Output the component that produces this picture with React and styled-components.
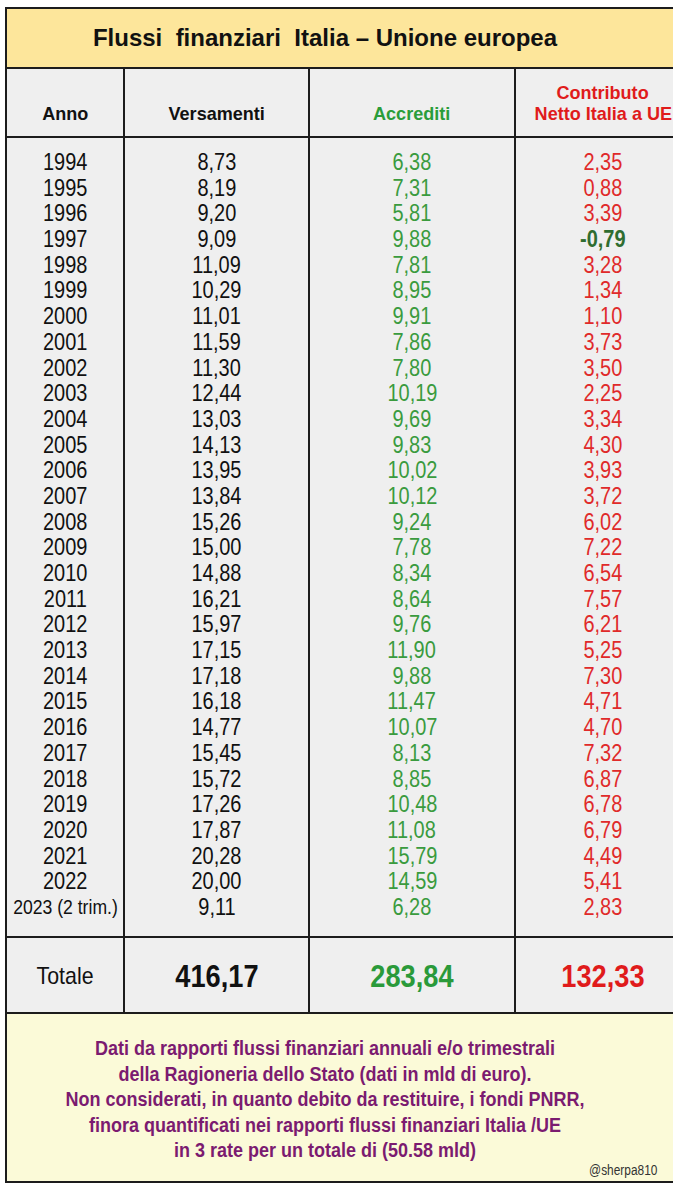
import styled, { createGlobalStyle } from "styled-components";

const GlobalStyle = createGlobalStyle`
  html, body {
    margin: 0;
    padding: 0;
    background: #ffffff;
    overflow: hidden;
  }
  body {
    font-family: "Liberation Sans", Arial, sans-serif;
  }
`;

const rows = [
  ["1994", "8,73", "6,38", "2,35"],
  ["1995", "8,19", "7,31", "0,88"],
  ["1996", "9,20", "5,81", "3,39"],
  ["1997", "9,09", "9,88", "-0,79"],
  ["1998", "11,09", "7,81", "3,28"],
  ["1999", "10,29", "8,95", "1,34"],
  ["2000", "11,01", "9,91", "1,10"],
  ["2001", "11,59", "7,86", "3,73"],
  ["2002", "11,30", "7,80", "3,50"],
  ["2003", "12,44", "10,19", "2,25"],
  ["2004", "13,03", "9,69", "3,34"],
  ["2005", "14,13", "9,83", "4,30"],
  ["2006", "13,95", "10,02", "3,93"],
  ["2007", "13,84", "10,12", "3,72"],
  ["2008", "15,26", "9,24", "6,02"],
  ["2009", "15,00", "7,78", "7,22"],
  ["2010", "14,88", "8,34", "6,54"],
  ["2011", "16,21", "8,64", "7,57"],
  ["2012", "15,97", "9,76", "6,21"],
  ["2013", "17,15", "11,90", "5,25"],
  ["2014", "17,18", "9,88", "7,30"],
  ["2015", "16,18", "11,47", "4,71"],
  ["2016", "14,77", "10,07", "4,70"],
  ["2017", "15,45", "8,13", "7,32"],
  ["2018", "15,72", "8,85", "6,87"],
  ["2019", "17,26", "10,48", "6,78"],
  ["2020", "17,87", "11,08", "6,79"],
  ["2021", "20,28", "15,79", "4,49"],
  ["2022", "20,00", "14,59", "5,41"],
  ["2023 (2 trim.)", "9,11", "6,28", "2,83"],
];

const colors = ["#111111", "#111111", "#3a9b3e", "#e02a2a"];

// the source uses a condensed face, so text is squeezed horizontally
const Frame = styled.div`
  margin: 7px 0 0 5px;
  width: 687px;
  border: 2px solid #1c1c1c;
  box-sizing: border-box;
`;

const TitleBand = styled.div`
  height: 60px;
  background: #fde69b;
  border-bottom: 2px solid #1c1c1c;
  display: flex;
  align-items: center;
  justify-content: center;
  padding-right: 47px;
  box-sizing: border-box;
`;

const Title = styled.h1`
  margin: 0;
  font-size: 24px;
  font-weight: 700;
  color: #111;
  white-space: pre;
`;

const Section = styled.div`
  display: grid;
  grid-template-columns: 118px 185px 206px 1fr;
  background: #efefef;
  border-bottom: 2px solid #1c1c1c;
  height: ${(p) => p.$h}px;
`;

const Cell = styled.div`
  border-right: ${(p) => (p.$end ? "none" : "2px solid #1c1c1c")};
  display: flex;
  flex-direction: column;
  align-items: center;
  justify-content: ${(p) => p.$justify || "center"};
  padding: ${(p) => p.$pad || "0"};
  text-align: center;
`;

const HeadLabel = styled.div`
  font-size: 19px;
  font-weight: 700;
  line-height: 21px;
  color: ${(p) => p.$color};
  transform: scaleX(0.95);
  white-space: nowrap;
`;

const Value = styled.div`
  font-size: ${(p) => (p.$small ? "20px" : "23.5px")};
  line-height: 25.7px;
  height: 25.7px;
  font-weight: ${(p) => (p.$bold ? 700 : 400)};
  color: ${(p) => p.$color};
  transform: scaleX(${(p) => (p.$small ? 0.88 : 0.85)});
  white-space: nowrap;
`;

const Total = styled.div`
  font-size: ${(p) => (p.$bold ? "32px" : "24px")};
  font-weight: ${(p) => (p.$bold ? 700 : 400)};
  color: ${(p) => p.$color};
  transform: scaleX(${(p) => (p.$bold ? 0.85 : 0.89)});
  margin-top: 2px;
`;

const Footer = styled.div`
  background: #fbfad8;
  height: 167px;
  padding: 22px 47px 0 0;
  box-sizing: border-box;
  position: relative;
`;

const Note = styled.p`
  margin: 0 auto;
  text-align: center;
  font-size: 20px;
  font-weight: 700;
  line-height: 25.5px;
  color: #7b1b70;
  transform: scaleX(0.9);
  white-space: nowrap;
`;

const Signature = styled.span`
  position: absolute;
  right: 33px;
  bottom: 3px;
  font-size: 14px;
  color: #333;
  transform: scaleX(0.85);
  transform-origin: right center;
`;

export default function App() {
  return (
    <>
      <GlobalStyle />
      <Frame>
        <TitleBand>
          <Title>{"Flussi  finanziari  Italia – Unione europea"}</Title>
        </TitleBand>
        <Section $h={67}>
          <Cell $justify="flex-end" $pad="0 0 12px">
            <HeadLabel $color="#111">Anno</HeadLabel>
          </Cell>
          <Cell $justify="flex-end" $pad="0 0 12px">
            <HeadLabel $color="#111">Versamenti</HeadLabel>
          </Cell>
          <Cell $justify="flex-end" $pad="0 0 12px">
            <HeadLabel $color="#2a9d3a">Accrediti</HeadLabel>
          </Cell>
          <Cell $end $justify="flex-end" $pad="0 0 12px">
            <HeadLabel $color="#e01b1b">Contributo</HeadLabel>
            <HeadLabel $color="#e01b1b">Netto Italia a UE</HeadLabel>
          </Cell>
        </Section>
        <Section $h={798}>
          {[0, 1, 2, 3].map((c) => (
            <Cell key={c} $end={c === 3} $justify="flex-start" $pad="12px 0 0">
              {rows.map((r, i) => {
                const neg = r[c].startsWith("-");
                return (
                  <Value
                    key={i}
                    $small={c === 0 && i === rows.length - 1}
                    $bold={neg}
                    $color={neg ? "#2f6d30" : colors[c]}
                  >
                    {r[c]}
                  </Value>
                );
              })}
            </Cell>
          ))}
        </Section>
        <Section $h={74}>
          <Cell>
            <Total $color="#111">Totale</Total>
          </Cell>
          <Cell>
            <Total $bold $color="#111">416,17</Total>
          </Cell>
          <Cell>
            <Total $bold $color="#2a9a3a">283,84</Total>
          </Cell>
          <Cell $end>
            <Total $bold $color="#e01b1b">132,33</Total>
          </Cell>
        </Section>
        <Footer>
          <Note>Dati da rapporti flussi finanziari annuali e/o trimestrali</Note>
          <Note>della Ragioneria dello Stato (dati in mld di euro).</Note>
          <Note>Non considerati, in quanto debito da restituire, i fondi PNRR,</Note>
          <Note>finora quantificati nei rapporti flussi finanziari Italia /UE</Note>
          <Note>in 3 rate per un totale di (50.58 mld)</Note>
          <Signature>@sherpa810</Signature>
        </Footer>
      </Frame>
    </>
  );
}
